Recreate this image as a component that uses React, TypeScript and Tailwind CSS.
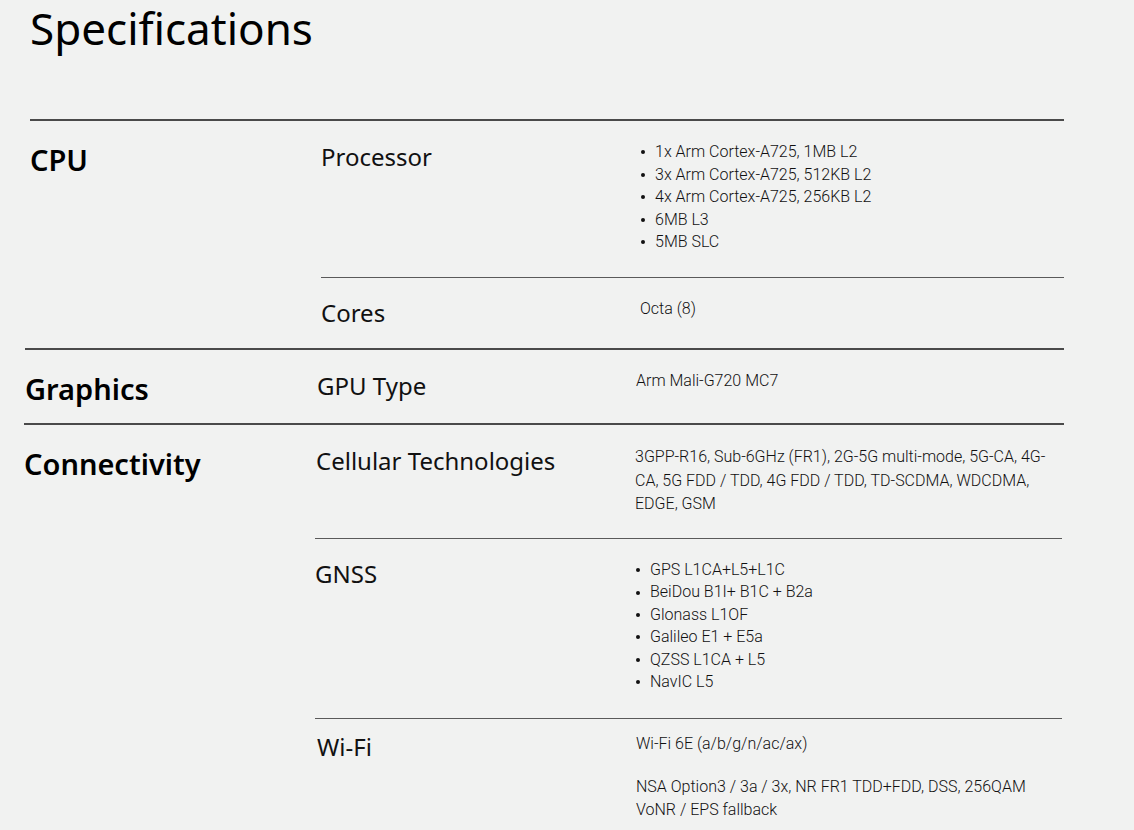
import React from "react";

const head = { fontFamily: '"Noto Sans", "Open Sans", sans-serif' };
const body = { fontFamily: 'Roboto, "Liberation Sans", sans-serif' };

function Bullets({ items, lh }: { items: string[]; lh: string }) {
  return (
    <ul className={`flex flex-col ${lh}`}>
      {items.map((t) => (
        <li key={t} className="flex items-center">
          <span className="ml-[1px] mr-[10px] inline-block h-[4px] w-[4px] shrink-0 rounded-full bg-[#111]" />
          <span>{t}</span>
        </li>
      ))}
    </ul>
  );
}

function SubLabel({ children, pt }: { children: React.ReactNode; pt: string }) {
  return (
    <div className={`shrink-0 text-[24px] leading-none text-[#111] ${pt}`} style={head}>
      {children}
    </div>
  );
}

function Value({ children, pt }: { children: React.ReactNode; pt: string }) {
  return (
    <div className={`flex-1 text-[16px] font-light text-[#111] ${pt}`} style={body}>
      {children}
    </div>
  );
}

function Heading({ children }: { children: React.ReactNode }) {
  return (
    <h2 className="text-[29px] font-semibold leading-none text-black" style={head}>
      {children}
    </h2>
  );
}

export default function App() {
  return (
    <div className="min-h-[830px] w-[1134px] overflow-hidden bg-[#f1f2f1]">
      <div className="h-[119px] pl-[30px]">
        <h1 className="text-[44px] leading-[56px] text-black" style={head}>
          Specifications
        </h1>
      </div>

      {/* CPU */}
      <section className="ml-[30px] flex w-[1034px] border-t-2 border-[#4a4a4a]">
        <div className="w-[291px] shrink-0 pt-[24px]">
          <Heading>CPU</Heading>
        </div>
        <div className="flex flex-1 flex-col">
          <div className="flex h-[156px]">
            <div className="w-[319px] shrink-0">
              <SubLabel pt="pt-[24px]">Processor</SubLabel>
            </div>
            <Value pt="pt-[20px]">
              <Bullets
                lh="leading-[22.5px]"
                items={[
                  "1x Arm Cortex-A725, 1MB L2",
                  "3x Arm Cortex-A725, 512KB L2",
                  "4x Arm Cortex-A725, 256KB L2",
                  "6MB L3",
                  "5MB SLC",
                ]}
              />
            </Value>
          </div>
          <div className="flex h-[71px] border-t border-[#5a5a5a]">
            <div className="w-[319px] shrink-0">
              <SubLabel pt="pt-[23px]">Cores</SubLabel>
            </div>
            <Value pt="pt-[20px]">
              <p className="leading-[22.5px]">Octa (8)</p>
            </Value>
          </div>
        </div>
      </section>

      {/* Graphics */}
      <section className="ml-[25px] flex w-[1039px] border-t-2 border-[#4a4a4a]">
        <div className="w-[292px] shrink-0 pt-[24px]">
          <Heading>Graphics</Heading>
        </div>
        <div className="flex flex-1 flex-col">
          <div className="flex h-[73px]">
            <div className="w-[319px] shrink-0">
              <SubLabel pt="pt-[24px]">GPU Type</SubLabel>
            </div>
            <Value pt="pt-[20px]">
              <p className="leading-[22.5px]">Arm Mali-G720 MC7</p>
            </Value>
          </div>
        </div>
      </section>

      {/* Connectivity */}
      <section className="ml-[24px] flex w-[1040px] border-t-2 border-[#4a4a4a]">
        <div className="w-[291px] shrink-0 pt-[24px]">
          <Heading>Connectivity</Heading>
        </div>
        <div className="flex flex-1 flex-col pr-[2px]">
          <div className="flex h-[113px]">
            <div className="w-[320px] shrink-0 pl-[1px]">
              <SubLabel pt="pt-[24px]">Cellular Technologies</SubLabel>
            </div>
            <Value pt="pt-[20px]">
              <p className="leading-[23.5px]">
                3GPP-R16, Sub-6GHz (FR1), 2G-5G multi-mode, 5G-CA, 4G-
                <br />
                CA, 5G FDD / TDD, 4G FDD / TDD, TD-SCDMA, WDCDMA,
                <br />
                EDGE, GSM
              </p>
            </Value>
          </div>
          <div className="flex h-[180px] border-t border-[#5a5a5a]">
            <div className="w-[320px] shrink-0">
              <SubLabel pt="pt-[23px]">GNSS</SubLabel>
            </div>
            <Value pt="pt-[20px]">
              <Bullets
                lh="leading-[22.4px]"
                items={[
                  "GPS L1CA+L5+L1C",
                  "BeiDou B1I+ B1C + B2a",
                  "Glonass L1OF",
                  "Galileo E1 + E5a",
                  "QZSS L1CA + L5",
                  "NavIC L5",
                ]}
              />
            </Value>
          </div>
          <div className="flex h-[112px] border-t border-[#5a5a5a]">
            <div className="w-[321px] shrink-0 pl-[2px]">
              <SubLabel pt="pt-[16px]">Wi-Fi</SubLabel>
            </div>
            <Value pt="pt-[14px]">
              <p className="leading-[22.5px]">Wi-Fi 6E (a/b/g/n/ac/ax)</p>
              <p className="mt-[20.5px] leading-[22.5px]">
                NSA Option3 / 3a / 3x, NR FR1 TDD+FDD, DSS, 256QAM
                <br />
                VoNR / EPS fallback
              </p>
            </Value>
          </div>
        </div>
      </section>
    </div>
  );
}
